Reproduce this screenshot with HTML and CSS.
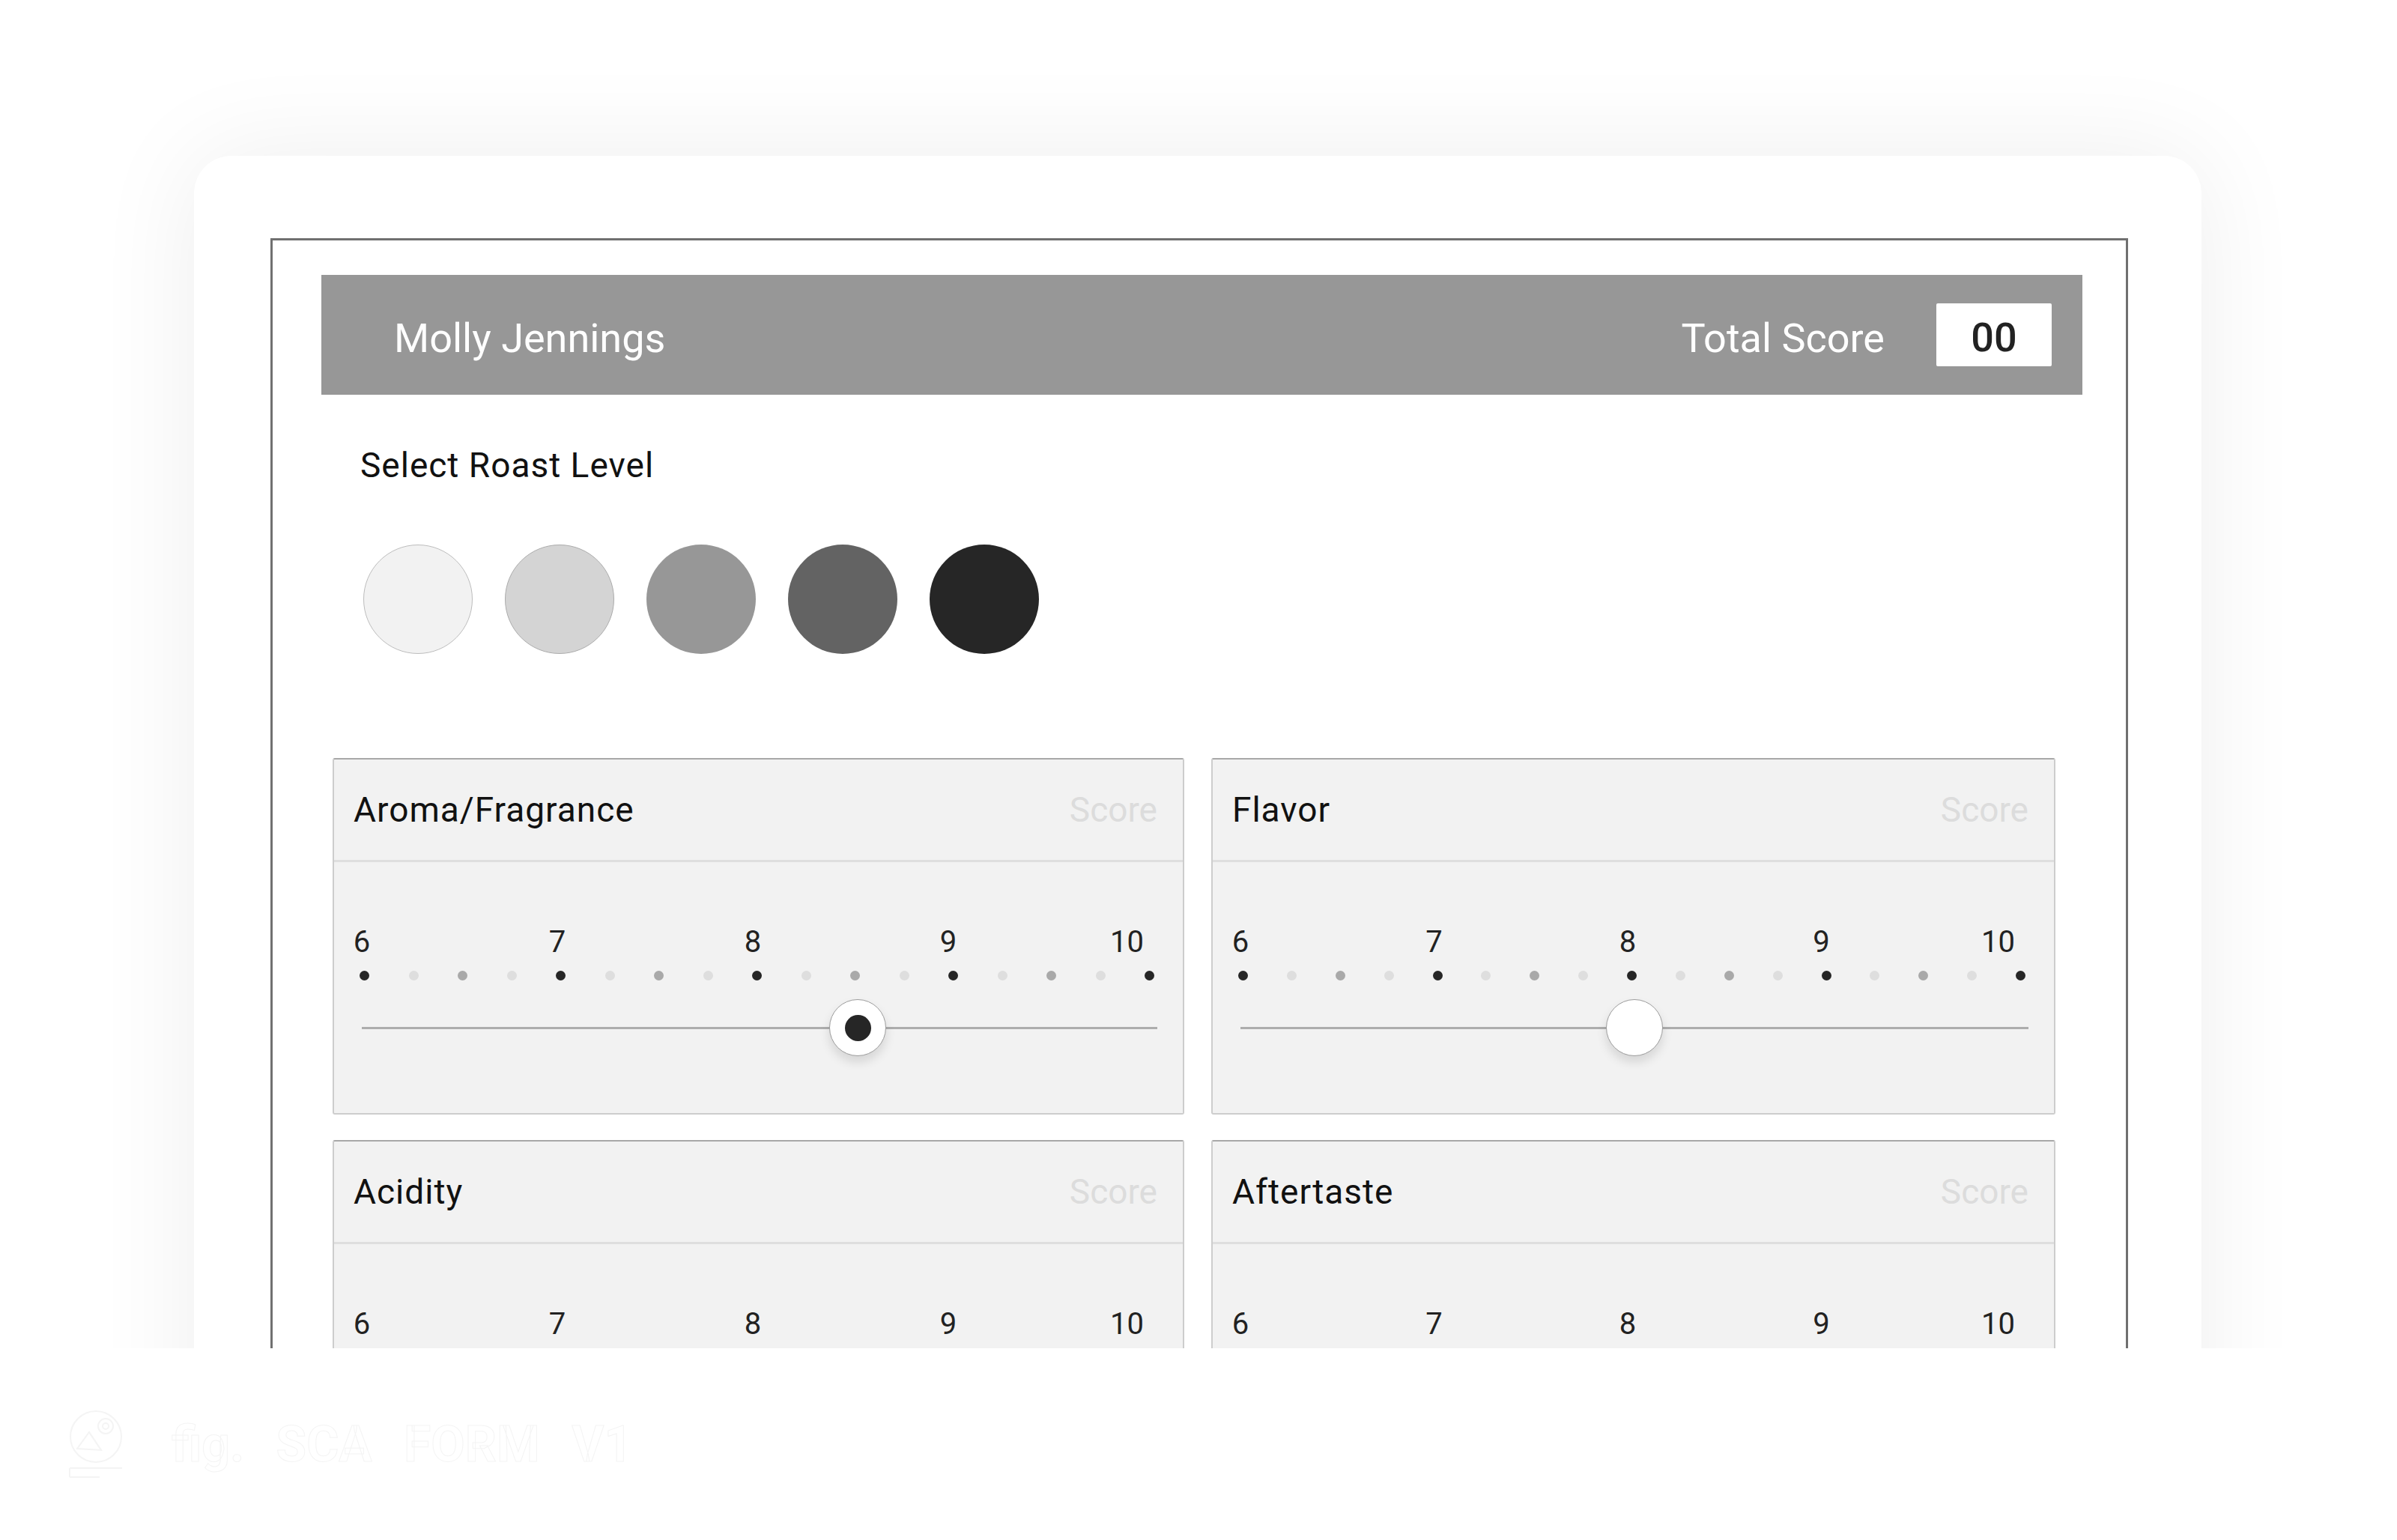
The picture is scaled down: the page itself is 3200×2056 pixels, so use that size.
FILE: index.html
```html
<!DOCTYPE html>
<html lang="en">
<head>
    <meta charset="UTF-8">
    <meta name="viewport" content="width=device-width, initial-scale=1.0">
    <title>Cupping Form</title>
    <link rel="stylesheet" href="styles.css">
</head>
<body>
    <div class="stage">
        <div class="sheet">
            <form class="cupping-form" id="cupping_form">
                <header class="taster-bar">
                    <span class="taster-name">Molly Jennings</span>
                    <div class="total">
                        <span class="total-label">Total Score</span>
                        <span class="total-value">00</span>
                    </div>
                </header>

                <section class="roast">
                    <h2 class="roast-title">Select Roast Level</h2>
                    <div class="swatches">
                        <button type="button" class="swatch swatch-1" aria-label="Light"></button>
                        <button type="button" class="swatch swatch-2" aria-label="Medium light"></button>
                        <button type="button" class="swatch swatch-3" aria-label="Medium"></button>
                        <button type="button" class="swatch swatch-4" aria-label="Medium dark"></button>
                        <button type="button" class="swatch swatch-5" aria-label="Dark"></button>
                    </div>
                </section>

                <div class="attributes">
                    <div class="attribute">
                        <div class="attribute-head">
                            <span class="attribute-name">Aroma/Fragrance</span>
                            <span class="attribute-score">Score</span>
                        </div>
                        <div class="attribute-body" data-value="8.5" data-set="true">
                            <div class="scale-labels"><span>6</span><span>7</span><span>8</span><span>9</span><span>10</span></div>
                            <div class="scale-dots"></div>
                            <div class="slider"><span class="thumb"></span></div>
                        </div>
                    </div>

                    <div class="attribute">
                        <div class="attribute-head">
                            <span class="attribute-name">Flavor</span>
                            <span class="attribute-score">Score</span>
                        </div>
                        <div class="attribute-body" data-value="8">
                            <div class="scale-labels"><span>6</span><span>7</span><span>8</span><span>9</span><span>10</span></div>
                            <div class="scale-dots"></div>
                            <div class="slider"><span class="thumb"></span></div>
                        </div>
                    </div>

                    <div class="attribute">
                        <div class="attribute-head">
                            <span class="attribute-name">Acidity</span>
                            <span class="attribute-score">Score</span>
                        </div>
                        <div class="attribute-body" data-value="8">
                            <div class="scale-labels"><span>6</span><span>7</span><span>8</span><span>9</span><span>10</span></div>
                            <div class="scale-dots"></div>
                            <div class="slider"><span class="thumb"></span></div>
                        </div>
                    </div>

                    <div class="attribute">
                        <div class="attribute-head">
                            <span class="attribute-name">Aftertaste</span>
                            <span class="attribute-score">Score</span>
                        </div>
                        <div class="attribute-body" data-value="8">
                            <div class="scale-labels"><span>6</span><span>7</span><span>8</span><span>9</span><span>10</span></div>
                            <div class="scale-dots"></div>
                            <div class="slider"><span class="thumb"></span></div>
                        </div>
                    </div>
                </div>
            </form>
        </div>
    </div>

    <footer class="credit">
        <svg class="credit-logo" width="78" height="92" viewBox="0 0 78 92" fill="none" stroke="#f4f4f4" stroke-width="2">
            <circle cx="39" cy="36" r="34"/>
            <circle cx="52" cy="22" r="10"/>
            <circle cx="52" cy="22" r="4"/>
            <path d="M14 52 L30 30 L46 54 Z"/>
            <line x1="4" y1="78" x2="74" y2="78"/>
            <line x1="4" y1="78" x2="4" y2="90"/>
            <line x1="4" y1="90" x2="44" y2="90"/>
        </svg>
        <span class="credit-text">fig. SCA FORM V1</span>
    </footer>

    <script>
        // build the 17 quarter-point dots and place each thumb from its value
        const bodies = document.querySelectorAll('.attribute-body');

        bodies.forEach(function (body) {
            const dots = body.querySelector('.scale-dots');
            for (let i = 0; i <= 16; i++) {
                const dot = document.createElement('span');
                dot.className = 'dot';
                if (i % 4 === 0) {
                    dot.classList.add('whole');
                } else if (i % 2 === 0) {
                    dot.classList.add('half');
                }
                dots.appendChild(dot);
            }

            const value = parseFloat(body.dataset.value);
            const thumb = body.querySelector('.thumb');
            thumb.style.left = ((value - 6) / 4 * 100) + '%';
            if (body.dataset.set === 'true') {
                thumb.classList.add('is-set');
            }
        });
    </script>
</body>
</html>
```

FILE: styles.css
```css
* {
    box-sizing: border-box;
}

body {
    margin: 0;
    background-color: #fff;
    font-family: 'Roboto', 'Liberation Sans', sans-serif;
    color: #111;
}

.stage {
    height: 1800px;
    overflow: hidden;
    padding: 208px 0 0 259px;
}

.sheet {
    width: 2680px;
    height: 1800px;
    padding: 110px 98px 0 102px;
    background-color: #fff;
    border-radius: 50px 50px 0 0;
    box-shadow: 0 0 140px rgba(0, 0, 0, 0.07);
}

.cupping-form {
    height: 1700px;
    border: 3px solid #707070;
    padding: 46px 58px 0 65px;
}

/* taster header */
.taster-bar {
    display: flex;
    align-items: center;
    justify-content: space-between;
    height: 160px;
    padding: 0 41px 0 97px;
    background-color: #979797;
    color: #fff;
    font-size: 54px;
    line-height: 1;
}

.taster-name,
.total-label {
    padding-top: 10px;
}

.total {
    display: flex;
    align-items: center;
    gap: 69px;
}

.total-value {
    display: flex;
    align-items: center;
    justify-content: center;
    width: 154px;
    height: 84px;
    padding-top: 8px;
    background-color: #fff;
    border-radius: 2px;
    color: #222;
    font-weight: 500;
}

/* roast level */
.roast {
    padding: 71px 0 0 52px;
}

.roast-title {
    margin: 0;
    font-size: 46px;
    font-weight: 400;
    line-height: 1;
    letter-spacing: 1px;
    color: #111;
}

.swatches {
    display: flex;
    gap: 43px;
    margin-top: 83px;
    padding-left: 4px;
}

.swatch {
    width: 146px;
    height: 146px;
    padding: 0;
    border: 0;
    border-radius: 50%;
    cursor: pointer;
}

.swatch-1 {
    background-color: #f2f2f2;
    border: 1px solid #bdbdbd;
}

.swatch-2 {
    background-color: #d4d4d4;
    border: 1px solid #acacac;
}

.swatch-3 {
    background-color: #979797;
}

.swatch-4 {
    background-color: #636363;
}

.swatch-5 {
    background-color: #262626;
}

/* attribute cards */
.attributes {
    display: grid;
    grid-template-columns: 1137px 1fr;
    column-gap: 36px;
    row-gap: 34px;
    margin: 139px 36px 0 15px;
}

.attribute {
    background-color: #f2f2f2;
    border: 2px solid #cdcdcd;
    border-top-color: #a8a8a8;
    border-radius: 3px;
}

.attribute-head {
    display: flex;
    align-items: center;
    justify-content: space-between;
    height: 137px;
    padding: 0 34px 0 26px;
    border-bottom: 3px solid #dedede;
    font-size: 46px;
    line-height: 1;
}

.attribute-name {
    letter-spacing: 1px;
}

.attribute-score {
    color: #dcdcdc;
}

.attribute-body {
    padding: 87px 0 76px;
}

.scale-labels {
    display: flex;
    justify-content: space-between;
    padding: 0 52px 0 37px;
    font-size: 40px;
    line-height: 1;
    color: #222;
}

.scale-labels span {
    display: flex;
    justify-content: center;
    width: 0;
    white-space: nowrap;
}

.scale-labels span:last-child {
    justify-content: flex-end;
}

.scale-dots {
    display: flex;
    align-items: center;
    justify-content: space-between;
    height: 13px;
    margin-top: 18px;
    padding: 0 38px 0 34px;
}

.dot {
    width: 13px;
    height: 13px;
    border-radius: 50%;
    background-color: #dedede;
}

.dot.half {
    background-color: #a9a9a9;
}

.dot.whole {
    background-color: #262626;
}

.slider {
    position: relative;
    height: 76px;
    margin: 25px 41px 0 44px;
}

.slider::before {
    content: "";
    position: absolute;
    left: -7px;
    right: -7px;
    top: 37px;
    height: 3px;
    background-color: #adadad;
}

.thumb {
    position: absolute;
    top: 0;
    display: flex;
    align-items: center;
    justify-content: center;
    width: 76px;
    height: 76px;
    margin-left: -38px;
    border: 1px solid #9c9c9c;
    border-radius: 50%;
    background-color: #fff;
    box-shadow: 0 8px 14px rgba(0, 0, 0, 0.12);
}

.thumb.is-set::after {
    content: "";
    width: 35px;
    height: 35px;
    border-radius: 50%;
    background-color: #262626;
}

/* footer credit */
.credit {
    display: flex;
    align-items: center;
    gap: 62px;
    height: 256px;
    padding-left: 89px;
}

.credit-text {
    font-size: 66px;
    font-weight: 700;
    word-spacing: 26px;
    color: #fff;
    -webkit-text-stroke: 1px #f4f4f4;
}
```
